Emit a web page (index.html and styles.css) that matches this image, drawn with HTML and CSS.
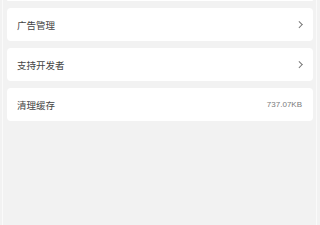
FILE: index.html
```html
<!DOCTYPE html>
<html lang="zh">
    <head>
        <meta charset="UTF-8" />
        <meta name="viewport" content="width=device-width, initial-scale=1.0" />
        <title>设置</title>
        <link rel="stylesheet" href="styles.css">
    </head>
    <body>
        <div class="page">
            <!-- 上方被滚动遮住的一项 -->
            <div class="cell cell-cut"></div>

            <a class="cell" href="javascript:;">
                <span class="cell-title">广告管理</span>
                <span class="arrow"></span>
            </a>
            <a class="cell" href="javascript:;">
                <span class="cell-title">支持开发者</span>
                <span class="arrow"></span>
            </a>
            <div class="cell">
                <span class="cell-title">清理缓存</span>
                <span class="cell-value">737.07KB</span>
            </div>
        </div>
    </body>
</html>
```
FILE: styles.css
```css
* {
    margin: 0;
    padding: 0;
    box-sizing: border-box;
}

html,
body {
    height: 100%;
}

body {
    background-color: #f2f2f2;
    font-family: "Noto Sans CJK SC", "Noto Sans", sans-serif;
    overflow: hidden;
}

a {
    text-decoration: none;
    color: inherit;
}

.page {
    height: 100%;
    margin: 0 3px 0 2px;
    padding: 0 3px 0 4px;
    border-left: 1px solid #fafafa;
    border-right: 1px solid #fafafa;
    display: flex;
    flex-direction: column;
    gap: 7px;
}

/* 列表单元格 */
.cell {
    height: 33px;
    flex-shrink: 0;
    background-color: #fff;
    border-radius: 4px;
    padding: 0 11px 0 10px;
    display: flex;
    align-items: center;
    justify-content: space-between;
}

.cell-cut {
    height: 1px;
    border-radius: 0 0 4px 4px;
}

.cell-title {
    font-size: 9.5px;
    color: #444;
}

.cell-value {
    font-family: "Liberation Sans", Arial, sans-serif;
    font-size: 8px;
    color: #7a7a7a;
}

/* 右箭头 */
.arrow {
    width: 4.5px;
    height: 4.5px;
    margin-right: 1px;
    border-top: 1px solid #777;
    border-right: 1px solid #777;
    transform: rotate(45deg);
}
```
